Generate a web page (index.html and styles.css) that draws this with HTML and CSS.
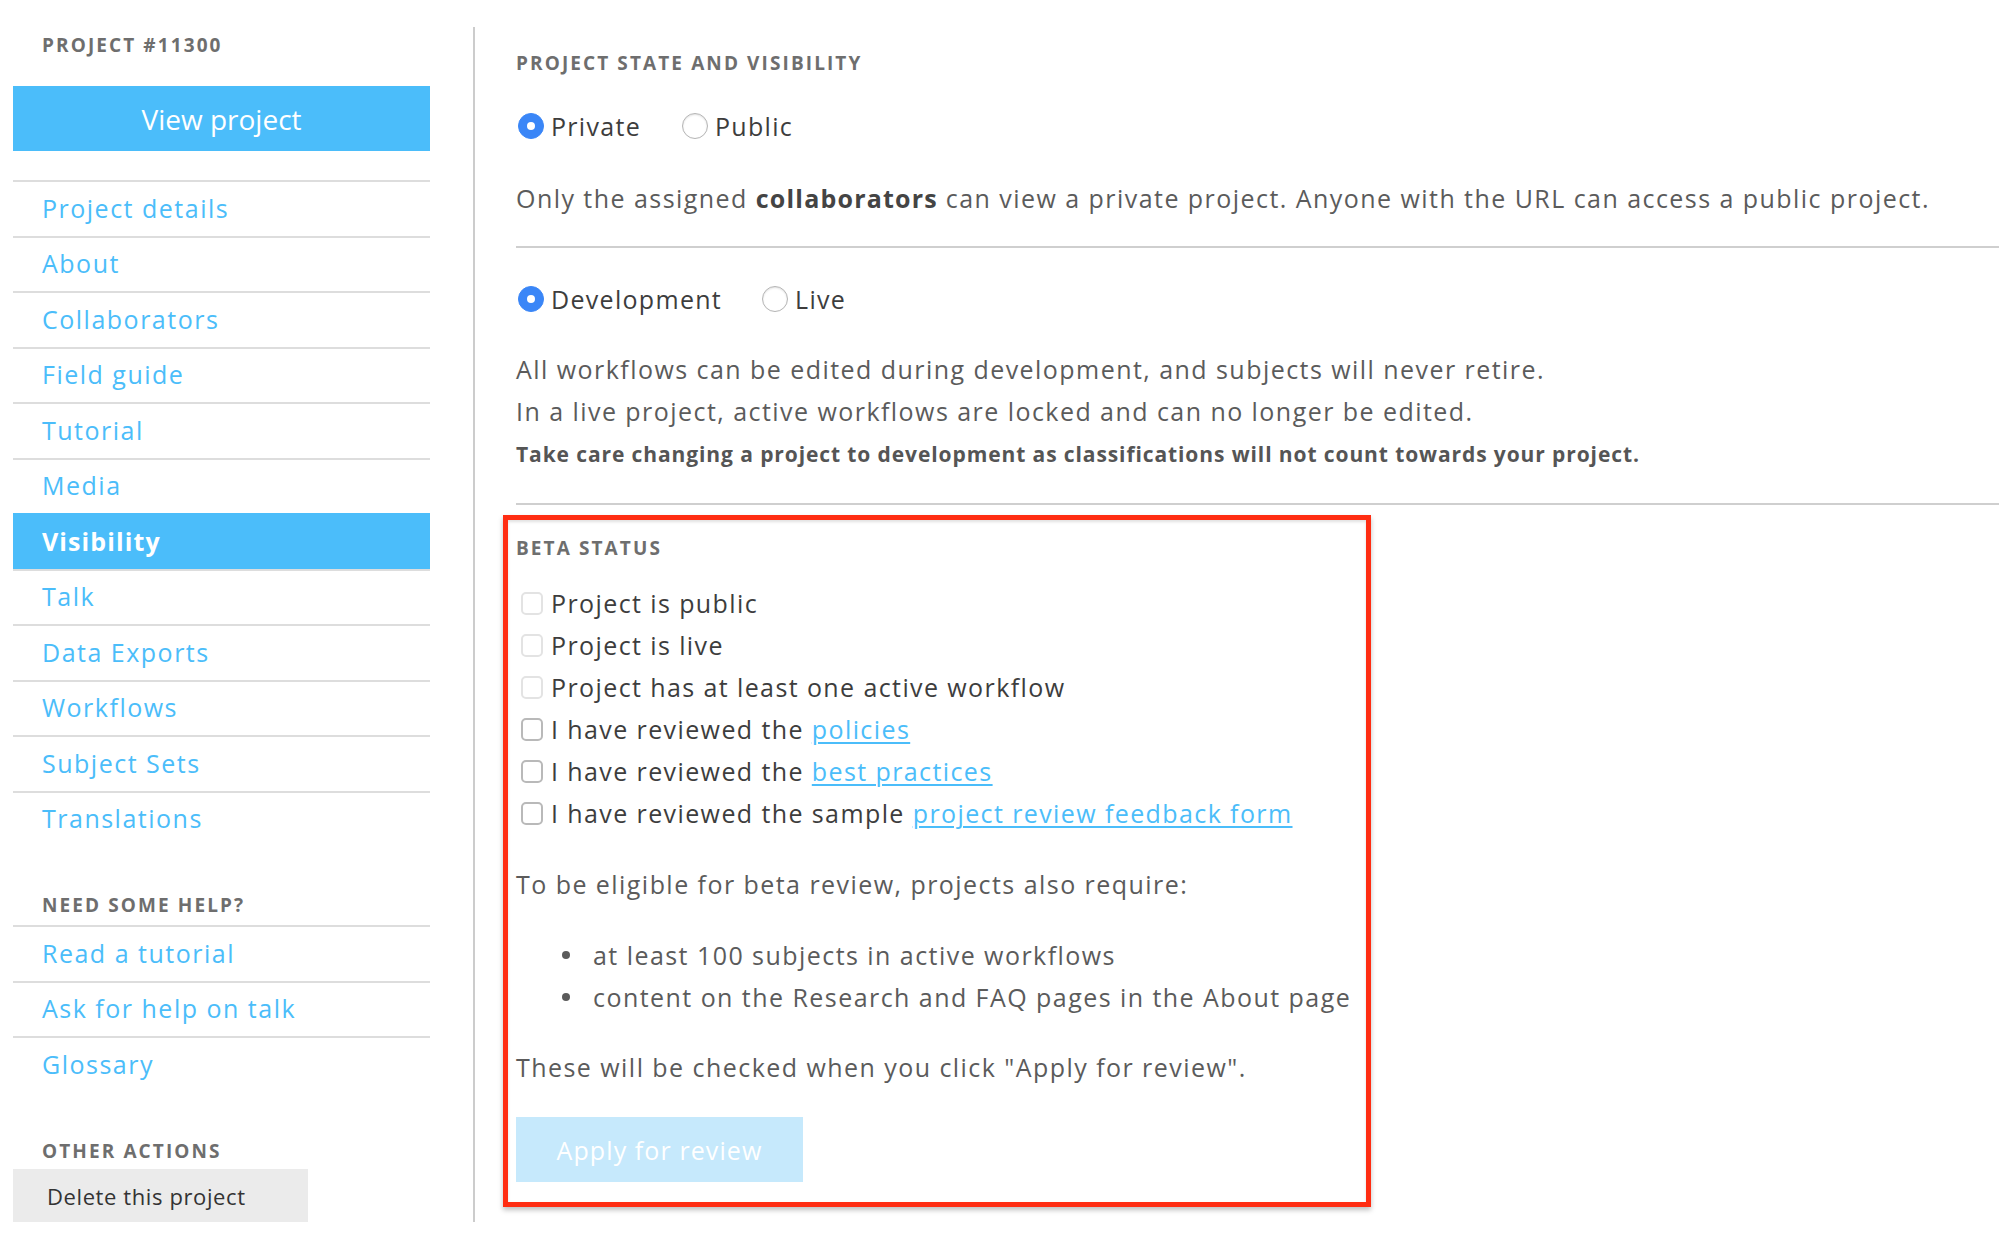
FILE: index.html
```html
<!DOCTYPE html>
<html lang="en">
<head>
<meta charset="utf-8">
<title>Project #11300 – Visibility</title>
<link rel="stylesheet" href="styles.css">
</head>
<body>
<div class="layout">
  <aside class="sidebar">
    <h3 class="side-heading">Project #11300</h3>
    <a class="view-btn" href="#">View project</a>
    <nav class="nav-list">
      <a class="nav-item" href="#">Project details</a>
      <a class="nav-item" href="#">About</a>
      <a class="nav-item" href="#">Collaborators</a>
      <a class="nav-item" href="#">Field guide</a>
      <a class="nav-item" href="#">Tutorial</a>
      <a class="nav-item" href="#">Media</a>
      <a class="nav-item active" href="#">Visibility</a>
      <a class="nav-item" href="#">Talk</a>
      <a class="nav-item" href="#">Data Exports</a>
      <a class="nav-item" href="#">Workflows</a>
      <a class="nav-item" href="#">Subject Sets</a>
      <a class="nav-item" href="#">Translations</a>
    </nav>
    <h3 class="side-heading help-heading">Need some help?</h3>
    <nav class="nav-list">
      <a class="nav-item" href="#">Read a tutorial</a>
      <a class="nav-item" href="#">Ask for help on talk</a>
      <a class="nav-item" href="#">Glossary</a>
    </nav>
    <h3 class="side-heading actions-heading">Other actions</h3>
    <button class="delete-btn" type="button">Delete this project</button>
  </aside>

  <main class="main">
    <h3 class="section-heading">Project state and visibility</h3>

    <div class="radio-row first-radios">
      <label class="radio-opt opt-private"><span class="radio checked"></span>Private</label>
      <label class="radio-opt"><span class="radio"></span>Public</label>
    </div>
    <p class="body-text desc">Only the assigned <strong>collaborators</strong> can view a private project. Anyone with the URL can access a public project.</p>

    <hr class="rule first-rule">

    <div class="radio-row dev-radios">
      <label class="radio-opt opt-dev"><span class="radio checked"></span>Development</label>
      <label class="radio-opt"><span class="radio"></span>Live</label>
    </div>
    <p class="body-text lines">All workflows can be edited during development, and subjects will never retire.<br>In a live project, active workflows are locked and can no longer be edited.</p>
    <p class="warning">Take care changing a project to development as classifications will not count towards your project.</p>

    <hr class="rule second-rule">

    <section class="beta">
      <h3 class="section-heading">Beta status</h3>
      <div class="checklist">
        <label class="check-row"><span class="checkbox disabled"></span>Project is public</label>
        <label class="check-row"><span class="checkbox disabled"></span>Project is live</label>
        <label class="check-row"><span class="checkbox disabled"></span>Project has at least one active workflow</label>
        <label class="check-row"><span class="checkbox"></span>I have reviewed the&nbsp;<a class="link" href="#">policies</a></label>
        <label class="check-row"><span class="checkbox"></span>I have reviewed the&nbsp;<a class="link" href="#">best practices</a></label>
        <label class="check-row"><span class="checkbox"></span>I have reviewed the sample&nbsp;<a class="link" href="#">project review feedback form</a></label>
      </div>
      <p class="body-text eligible">To be eligible for beta review, projects also require:</p>
      <ul class="req-list">
        <li>at least 100 subjects in active workflows</li>
        <li>content on the Research and FAQ pages in the About page</li>
      </ul>
      <p class="body-text checked-note">These will be checked when you click "Apply for review".</p>
      <button class="apply-btn" type="button" disabled>Apply for review</button>
    </section>
  </main>
</div>
</body>
</html>
```

FILE: styles.css
```css
* { box-sizing: border-box; }

html, body {
  margin: 0;
  padding: 0;
  background: #ffffff;
}

body {
  font-family: "Open Sans", "Noto Sans", "DejaVu Sans", sans-serif;
  color: #5b5b5b;
}

.layout {
  display: flex;
  align-items: stretch;
  padding-top: 27px;
  padding-left: 13px;
}

/* ---------- Sidebar ---------- */
.sidebar {
  width: 417px;
  flex: none;
  padding-top: 8px;
  display: flex;
  flex-direction: column;
}

.side-heading,
.section-heading {
  margin: 0;
  font-size: 19px;
  line-height: 20px;
  font-weight: 700;
  letter-spacing: 2.1px;
  text-transform: uppercase;
  color: #6e6e6e;
}

.side-heading {
  padding-left: 29px;
}

.view-btn {
  margin-top: 31px;
  height: 65px;
  display: flex;
  align-items: center;
  justify-content: center;
  background: #4bbdfa;
  color: #ffffff;
  font-size: 28px;
  text-decoration: none;
}

.nav-list {
  display: flex;
  flex-direction: column;
  margin-top: 29px;
}

.nav-item {
  height: 55.5px;
  border-top: 2px solid #dddddd;
  display: flex;
  align-items: center;
  padding-left: 29px;
  padding-bottom: 2px;
  font-size: 25px;
  letter-spacing: 1.5px;
  color: #4bbdfa;
  text-decoration: none;
}

.nav-item.active {
  background: #4bbdfa;
  border-top-color: #4bbdfa;
  color: #ffffff;
  font-weight: 700;
  letter-spacing: 1.1px;
}

.help-heading {
  margin-top: 49px;
}

.help-heading + .nav-list {
  margin-top: 10px;
}

.actions-heading {
  margin-top: 49.5px;
}

.delete-btn {
  margin-top: 8px;
  width: 295px;
  height: 53px;
  border: none;
  background: #ebebeb;
  color: #333333;
  font-family: inherit;
  font-size: 22px;
  letter-spacing: 0.6px;
  text-align: left;
  padding: 0 0 0 34px;
}

/* ---------- Main ---------- */
.main {
  flex: 1;
  margin-left: 43px;
  border-left: 2px solid #cccccc;
  padding-left: 41px;
  padding-top: 25.5px;
  min-width: 0;
}

.radio-row {
  display: flex;
  align-items: center;
  height: 40px;
}

.first-radios { margin-top: 33.5px; }
.dev-radios { margin-top: 31px; }

.radio-opt {
  display: inline-flex;
  align-items: center;
  font-size: 25px;
  letter-spacing: 1.3px;
  color: #3d3d3d;
}

.opt-private { margin-right: 39px; }
.opt-dev { margin-right: 38px; }

.radio {
  width: 26px;
  height: 26px;
  border-radius: 50%;
  margin: 0 7px 0 2px;
  border: 1px solid #b4b4b4;
  background: #ffffff;
  box-shadow: inset 0 1px 2px rgba(0, 0, 0, 0.12);
  display: inline-flex;
  align-items: center;
  justify-content: center;
  flex: none;
}

.radio.checked {
  background: #3a86f7;
  border-color: #3a86f7;
  box-shadow: none;
}

.radio.checked::after {
  content: "";
  width: 8px;
  height: 8px;
  border-radius: 50%;
  background: #ffffff;
}

.body-text {
  margin: 0;
  font-size: 25px;
  line-height: 42px;
  letter-spacing: 1.45px;
  color: #5b5b5b;
}

.body-text strong {
  color: #444444;
  letter-spacing: 1.2px;
}

.desc { margin-top: 31px; }

.rule {
  margin: 0;
  border: none;
  height: 2px;
  background: #cfcfcf;
}

.first-rule { margin-top: 27px; }

.lines { margin-top: 29px; }

.warning {
  margin: 9px 0 0;
  font-size: 21px;
  line-height: 26px;
  font-weight: 700;
  letter-spacing: 0.9px;
  color: #555555;
}

.second-rule { margin-top: 36px; }

/* ---------- Beta box ---------- */
.beta {
  margin-top: 10px;
  margin-left: -13px;
  width: 868px;
  border: 5px solid #ff2d12;
  padding: 18px 0 20px 8px;
  box-shadow: 0 3px 5px rgba(0, 0, 0, 0.25), inset 0 2px 3px rgba(0, 0, 0, 0.12);
}

.checklist {
  margin-top: 24px;
  display: flex;
  flex-direction: column;
}

.check-row {
  height: 42px;
  display: flex;
  align-items: center;
  font-size: 25px;
  letter-spacing: 1.4px;
  color: #3d3d3d;
}

.checkbox {
  width: 22px;
  height: 23px;
  margin: 0 8px 0 5px;
  border: 2px solid #b9b9b9;
  border-radius: 5px;
  background: #ffffff;
  flex: none;
}

.checkbox.disabled {
  border-color: #e3e3e3;
}

.link {
  color: #4bbdfa;
  text-decoration: underline;
  text-decoration-thickness: 2px;
  text-underline-offset: 3px;
}

.eligible { margin-top: 29px; }

.req-list {
  margin: 29px 0 0;
  padding: 0 0 0 46px;
  list-style: none;
}

.req-list li {
  display: flex;
  align-items: center;
  font-size: 25px;
  line-height: 42px;
  letter-spacing: 1.45px;
  color: #5b5b5b;
}

.req-list li::before {
  content: "";
  width: 8px;
  height: 8px;
  border-radius: 50%;
  background: #5b5b5b;
  margin-right: 23px;
  flex: none;
}

.checked-note { margin-top: 28px; }

.apply-btn {
  margin-top: 29px;
  width: 287px;
  height: 65px;
  border: none;
  background: #c6e9fc;
  color: #ffffff;
  font-family: inherit;
  font-size: 25px;
  letter-spacing: 1.1px;
  padding: 0;
  display: block;
}
```
